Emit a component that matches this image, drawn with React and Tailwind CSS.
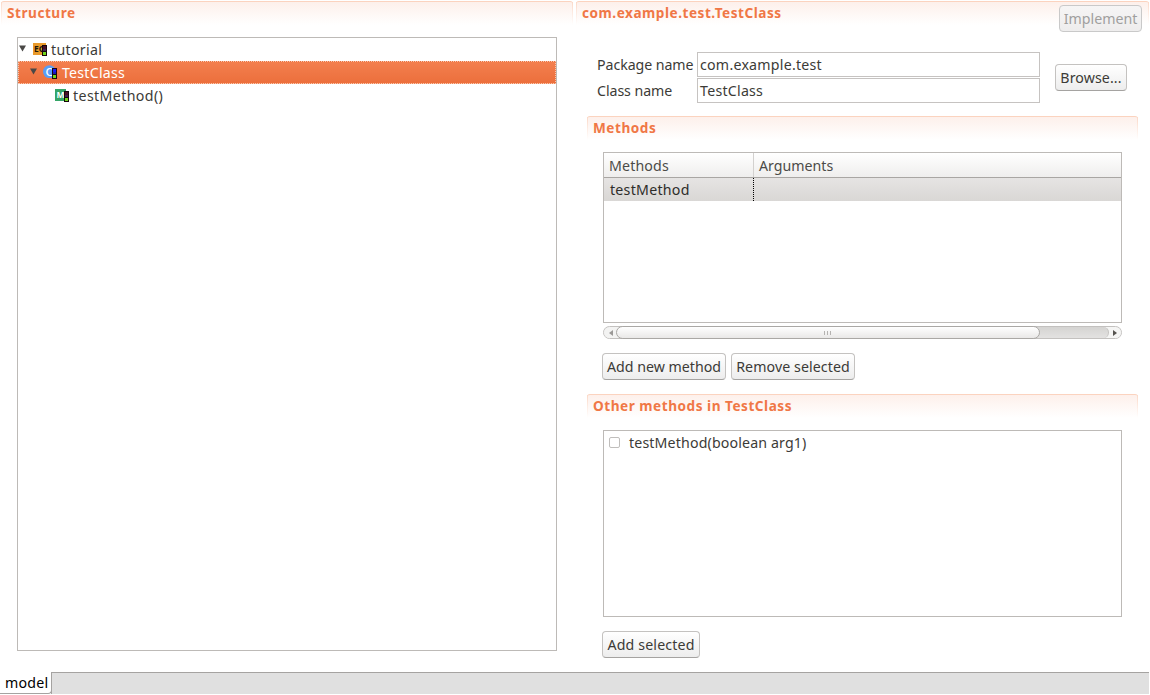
import React from "react";

function SectionHeader({ children, className = "" }) {
  return (
    <div
      className={
        "relative h-6 rounded-t-[3px] border-t border-[#fbd3bf] bg-linear-to-b from-[#fdf0eb] to-white " +
        className
      }
    >
      <span className="absolute top-0 left-0 h-full w-px bg-linear-to-b from-[#fbd9c8] to-white" />
      <span className="absolute top-0 right-0 h-full w-px bg-linear-to-b from-[#fbd9c8] to-white" />
      <h2 className="pl-1.5 text-[13.6px] leading-[22px] font-bold tracking-[0.52px] whitespace-nowrap text-[#f07746]">
        {children}
      </h2>
    </div>
  );
}

function Button({ children, className = "", disabled = false }) {
  return (
    <button
      disabled={disabled}
      className={
        "flex h-[27px] shrink-0 items-center justify-center rounded-[4px] border whitespace-nowrap " +
        (disabled
          ? "border-[#c9c9c9] bg-linear-to-b from-[#f6f5f5] to-[#eeeded] text-[#a09f9e] "
          : "border-[#c4c2c0] border-b-[#a5a3a1] bg-linear-to-b from-white to-[#ededed] text-[#3c3b37] ") +
        className
      }
    >
      {children}
    </button>
  );
}

function Arrow() {
  return (
    <svg width="7" height="7" viewBox="0 0 7 7" className="mb-0.5 shrink-0">
      <path d="M0 0.5H7L3.5 6.5Z" fill="#4a4846" />
    </svg>
  );
}

function Signal({ blue = false }) {
  return (
    <g shapeRendering="crispEdges">
      <rect x="9" y="3" width="5" height="11" fill="#17070d" />
      <rect x="10" y="4" width="3" height="3" fill={blue ? "#1717f5" : "#4b1024"} />
      <rect x="10" y="7" width="3" height="2" fill={blue ? "#1c1cb0" : "#3f2350"} />
      <rect x="10" y="10" width="3" height="3" fill="#6fd61c" />
    </g>
  );
}

function ProjectIcon() {
  return (
    <svg width="15" height="15" viewBox="0 0 15 15" className="shrink-0">
      <rect x="0" y="1" width="13" height="12" fill="#e99a2b" />
      <text x="1" y="10" fontSize="8.5" fontWeight="700" fill="#24180a">EC</text>
      <Signal />
    </svg>
  );
}

function ClassIcon() {
  return (
    <svg width="15" height="15" viewBox="0 0 15 15" className="shrink-0">
      <circle cx="6.4" cy="6.6" r="6.4" fill="#5a9df5" />
      <text x="2.4" y="10.6" fontSize="11.5" fontWeight="500" fill="#fff">C</text>
      <Signal blue />
    </svg>
  );
}

function MethodIcon() {
  return (
    <svg width="15" height="15" viewBox="0 0 15 15" className="shrink-0">
      <rect x="0" y="1" width="11" height="12" fill="#35a567" />
      <text x="1.4" y="10" fontSize="8.5" fontWeight="700" fill="#fff">M</text>
      <Signal />
    </svg>
  );
}

function Structure() {
  return (
    <section className="flex w-[573px] shrink-0 flex-col pt-px pl-px">
      <SectionHeader>Structure</SectionHeader>
      <div className="mt-3 ml-4 h-[614px] w-[540px] border border-[#bdbab7] bg-white">
        <div className="flex h-[23px] items-center pl-px">
          <Arrow />
          <span className="ml-[7px] flex">
            <ProjectIcon />
          </span>
          <span className="ml-[3px] tracking-[0.3px]">tutorial</span>
        </div>
        <div className="flex h-[23px] items-center border border-dotted border-[#f9c7ae] bg-linear-to-b from-[#f37f4e] to-[#ec6f3c] pl-[11px] text-white">
          <Arrow />
          <span className="ml-1.5 flex">
            <ClassIcon />
          </span>
          <span className="ml-1 tracking-[0.22px]">TestClass</span>
        </div>
        <div className="flex h-[23px] items-center pl-[37px]">
          <MethodIcon />
          <span className="ml-[3px] tracking-[0.38px]">testMethod()</span>
        </div>
      </div>
    </section>
  );
}

function Field({ label, value }) {
  return (
    <div className="flex h-[25px] items-center">
      <label className="w-[100px] tracking-[-0.07px]">{label}</label>
      <div className="flex h-[25px] w-[343px] items-center border border-[#c6c3c1] bg-white pl-0.5 tracking-[0.24px]">
        {value}
      </div>
    </div>
  );
}

function ScrollBar() {
  return (
    <div className="mt-[3px] flex h-[13px] w-[519px] items-center rounded-full border border-[#c3c1bf] bg-linear-to-b from-[#d9d8d6] to-[#e4e3e2]">
      <div className="-mr-2 flex h-full w-5 items-center rounded-l-full bg-[#f3f3f2] pl-[5px]">
        <svg width="4" height="6" viewBox="0 0 4 6">
          <path d="M4 0V6L0 3Z" fill="#9b9997" />
        </svg>
      </div>
      <div className="z-10 flex h-[13px] w-[424px] shrink-0 items-center justify-center gap-0.5 rounded-full border border-[#aaa8a5] bg-linear-to-b from-white to-[#e9e8e7] pr-0.5">
        <span className="h-1 w-px bg-[#b5b3b1]" />
        <span className="h-1 w-px bg-[#b5b3b1]" />
        <span className="h-1 w-px bg-[#b5b3b1]" />
      </div>
      <div className="-ml-2 flex h-full grow justify-end overflow-hidden rounded-r-full bg-[#f5f5f4]">
        <div className="h-full grow rounded-r-full border-r border-[#c3c1bf] bg-linear-to-b from-[#d5d4d2] to-[#e3e2e1]" />
        <div className="flex h-full w-3 items-center pl-1">
          <svg width="4" height="6" viewBox="0 0 4 6">
            <path d="M0 0V6L4 3Z" fill="#55534f" />
          </svg>
        </div>
      </div>
    </div>
  );
}

function Details() {
  return (
    <section className="ml-[3px] flex w-[573px] flex-col pt-px">
      <div className="relative">
        <SectionHeader>com.example.test.TestClass</SectionHeader>
        <div className="absolute top-1 right-[7px]">
          <Button disabled className="w-[83px]">
            Implement
          </Button>
        </div>
      </div>

      <div className="mt-[27px] ml-[21px] flex items-center">
        <div className="flex flex-col gap-px">
          <Field label="Package name" value="com.example.test" />
          <Field label="Class name" value="TestClass" />
        </div>
        <Button className="ml-[15px] w-[72px] tracking-[0.1px]">Browse...</Button>
      </div>

      <div className="mt-[13px] ml-[11px] w-[551px]">
        <SectionHeader>Methods</SectionHeader>
        <div className="mt-3 ml-4 h-[171px] w-[519px] border border-[#bdbab7] bg-white">
          <div className="flex h-[25px] border-b border-[#a9a6a3] bg-linear-to-b from-white to-[#efeeed] leading-[26px] text-[#4c4b48]">
            <div className="w-[150px] border-r border-[#d3d1cf] pl-[5px] tracking-[0.15px]">Methods</div>
            <div className="pl-[5px]">Arguments</div>
          </div>
          <div className="flex h-[23px] bg-linear-to-b from-[#e6e4e3] to-[#d9d7d5] leading-[23px] text-[#2e2d2a]">
            <div className="w-[150px] border-r border-dotted border-black pl-1.5 tracking-[0.25px]">
              testMethod
            </div>
          </div>
        </div>
        <div className="ml-4">
          <ScrollBar />
        </div>
        <div className="mt-3.5 ml-[15px] flex gap-[5px]">
          <Button className="w-[124px]">Add new method</Button>
          <Button className="w-[124px] tracking-[0.08px]">Remove selected</Button>
        </div>
      </div>

      <div className="mt-3.5 ml-[11px] w-[551px]">
        <SectionHeader>Other methods in TestClass</SectionHeader>
        <div className="mt-3 ml-4 h-[187px] w-[519px] border border-[#bdbab7] bg-white">
          <div className="flex h-[23px] items-center pl-[5px]">
            <span className="h-[11px] w-[11px] rounded-[2px] border border-[#c0bebc] bg-white" />
            <span className="ml-[9px] tracking-[0.14px]">testMethod(boolean arg1)</span>
          </div>
        </div>
        <Button className="mt-3.5 ml-[15px] w-[98px] tracking-[0.15px]">Add selected</Button>
      </div>
    </section>
  );
}

export default function App() {
  return (
    <div className="flex h-[695px] w-[1150px] flex-col overflow-hidden bg-white font-['Noto_Sans',sans-serif] text-[14.2px] leading-5 whitespace-nowrap text-[#3c3b37]">
      <main className="flex h-[672px] shrink-0">
        <Structure />
        <Details />
      </main>
      <footer className="flex h-[22px] w-[1149px]">
        <div className="h-[22px] w-[52px] rounded-br-[4px] border-r border-b border-[#a5a3a1] bg-white pl-[5px] leading-[21px] tracking-[0.2px] text-black">
          model
        </div>
        <div className="-ml-px grow border-t border-l border-[#a5a3a1] bg-[#e0e0e0]" />
      </footer>
    </div>
  );
}
